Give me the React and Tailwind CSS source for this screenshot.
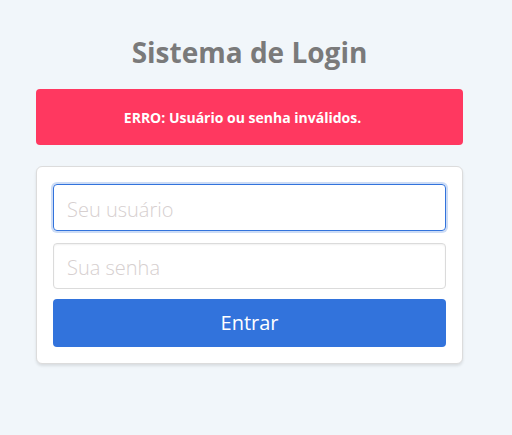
export default function App() {
  return (
    <div className="min-h-[435px] w-full bg-[#f1f6fa] pt-[34px]" style={{ fontFamily: '"Open Sans", "Noto Sans", sans-serif' }}>
      <div className="ml-[36px] w-[427px]">
        <h1 className="text-center text-[28px] font-bold leading-[36px] text-[#7a7a7a]">Sistema de Login</h1>
        <div className="mt-[19px] flex h-[56px] items-center justify-center rounded-[4px] bg-[#ff3860] pr-[14px] pt-[1px] text-[14px] font-bold text-white">
          ERRO: Usuário ou senha inválidos.
        </div>
        <div className="mt-[21px] rounded-[6px] border border-[#dcdcdc] bg-white px-[16px] pt-[17px] pb-[16px] shadow-[0_2px_3px_rgba(10,10,10,0.1)]">
          <input
            autoFocus
            placeholder="Seu usuário"
            className="block h-[47px] w-full rounded-[4px] border border-[#3273dc] px-[13px] pt-[3px] text-[20px] font-light text-[#363636] shadow-[0_0_0_2px_rgba(50,115,220,0.25)] outline-none placeholder:text-[#d6cfcf]"
          />
          <input
            type="password"
            placeholder="Sua senha"
            className="mt-[12px] block h-[46px] w-full rounded-[4px] border border-[#dbdbdb] px-[13px] pt-[3px] text-[20px] font-light text-[#363636] shadow-[inset_0_1px_2px_rgba(10,10,10,0.06)] outline-none placeholder:text-[#d6cfcf]"
          />
          <button className="mt-[10px] block h-[48px] w-full rounded-[4px] bg-[#3273dc] text-[20px] text-white">
            Entrar
          </button>
        </div>
      </div>
    </div>
  )
}
